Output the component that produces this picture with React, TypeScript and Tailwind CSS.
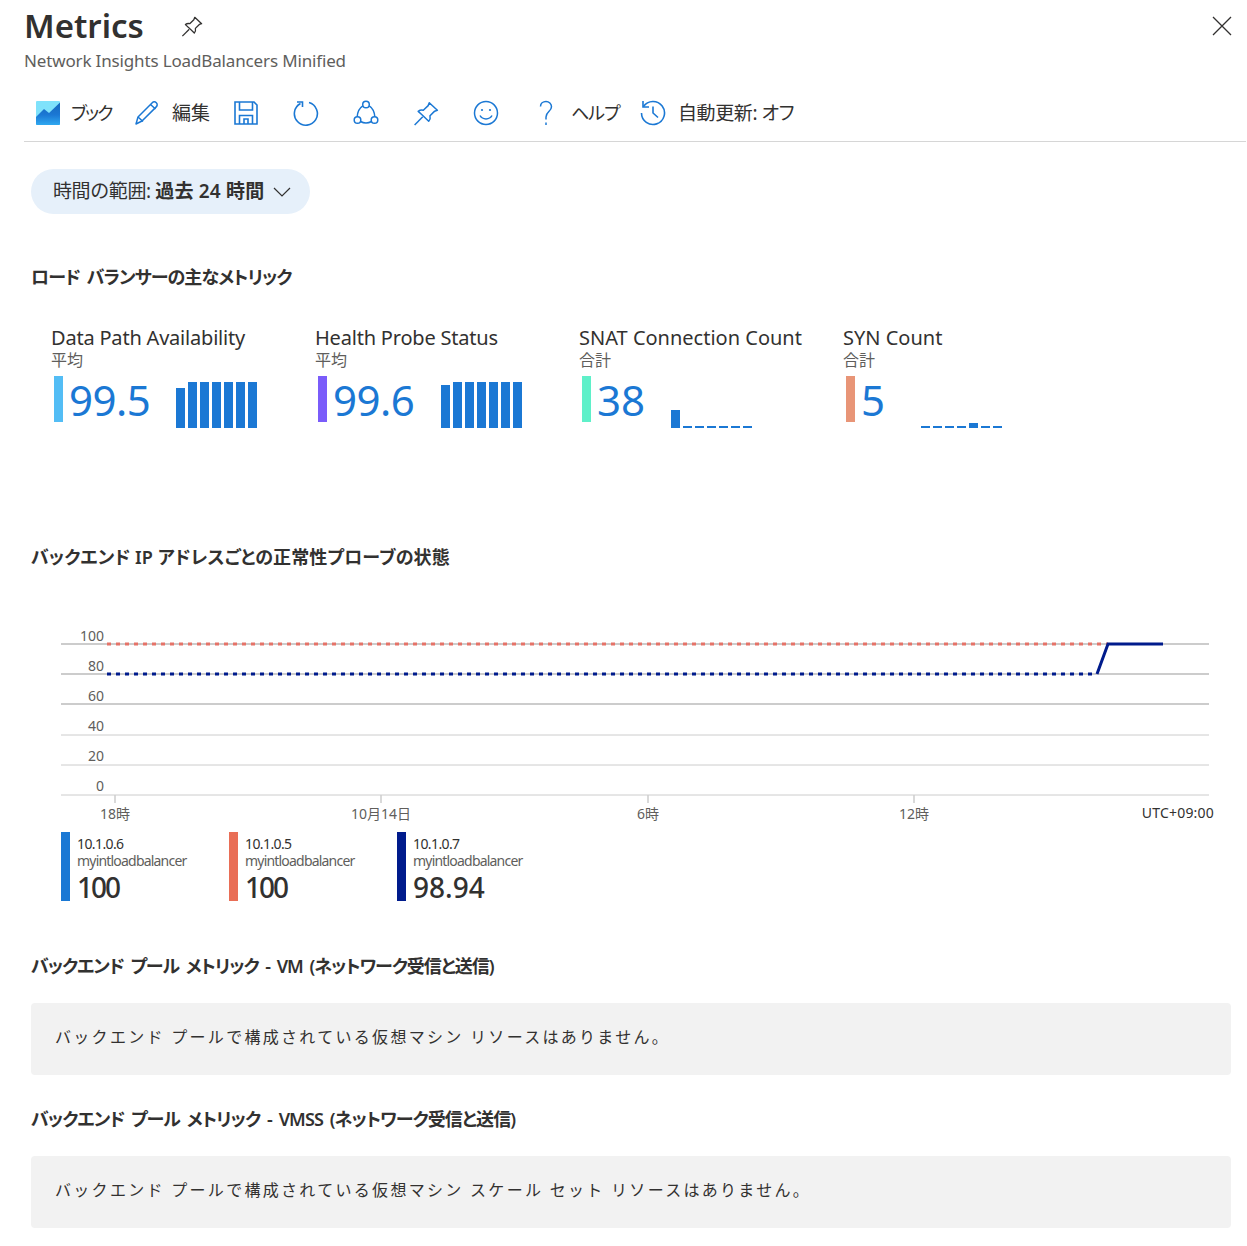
const toolIcon = "h-[26px] w-[26px] text-[#1b78d4]";

const Book = () => (
  <svg viewBox="0 0 24 24" className="h-6 w-6">
    <defs>
      <linearGradient id="bk" x1="0" y1="0" x2="0" y2="1">
        <stop offset="0" stopColor="#1668bd" />
        <stop offset="0.55" stopColor="#1b78d4" />
        <stop offset="1" stopColor="#2fa8f0" />
      </linearGradient>
    </defs>
    <rect width="24" height="24" rx="1" fill="#7fe2fb" />
    <path d="M0 16 L8 8 L13 12 L24 1.500 V23 a1 1 0 0 1-1 1 H1 a1 1 0 0 1-1-1Z" fill="url(#bk)" />
  </svg>
);

const Pencil = () => (
  <svg viewBox="0 0 26 26" fill="none" stroke="currentColor" strokeWidth="1.5" className={toolIcon}>
    <path d="M2 24l2-7L18 3c1.500-1.500 3-1.500 4.300-.2s1.200 2.900-.3 4.300L8 21z" strokeLinejoin="round" />
    <path d="M4 17l5 4.500M16.500 4.500l5 4.500" />
  </svg>
);

const Save = () => (
  <svg viewBox="0 0 26 26" fill="none" stroke="currentColor" strokeWidth="1.6" className={toolIcon}>
    <path d="M2 2h19l3 3v19H2z" />
    <path d="M6.500 2v8h13V2M6.500 24v-8.500h13V24M11 24v-5h4v5" />
  </svg>
);

const Refresh = () => (
  <svg viewBox="0 0 26 26" fill="none" stroke="currentColor" strokeWidth="1.6" className={toolIcon}>
    <path d="M16 2.600A11.500 11.500 0 1 1 7.500 3.500" />
    <path d="M3 2h5.500v5" strokeWidth="1.600" transform="translate(1 0)" />
  </svg>
);

const Share = () => (
  <svg viewBox="0 0 26 26" fill="none" stroke="currentColor" strokeWidth="1.5" className={toolIcon}>
    <circle cx="13" cy="4.500" r="3.300" />
    <circle cx="4.500" cy="20" r="3.300" />
    <circle cx="21.500" cy="20" r="3.300" />
    <path d="M9.800 5.800C6.500 8 4.500 12 4.200 16.700M16.200 5.800C19.500 8 21.500 12 21.800 16.700M7.500 21.500c3.500 2 7.500 2 11 0" />
  </svg>
);

const Pin = ({ className }: { className: string }) => (
  <svg viewBox="0 0 24 24" fill="none" stroke="currentColor" strokeWidth="1.4" strokeLinejoin="round" className={className}>
    <path d="M15 1.500l7.500 7-2.500.8-4.300 4.300c.5 2 0 3.700-1.200 5L8.500 12.800 4.800 9.500c1.500-1.200 3-1.500 4.700-1l4.500-4.300z" transform="translate(0 1)" />
    <path d="M9 15.500L1.500 23" />
  </svg>
);

const Smile = () => (
  <svg viewBox="0 0 26 26" fill="none" stroke="currentColor" strokeWidth="1.5" className={toolIcon}>
    <circle cx="13" cy="13" r="11.500" />
    <circle cx="9" cy="10" r="1.100" fill="currentColor" stroke="none" />
    <circle cx="17" cy="10" r="1.100" fill="currentColor" stroke="none" />
    <path d="M7 15.500c2.500 4.500 9.500 4.500 12 0" />
  </svg>
);

const Help = () => (
  <svg viewBox="0 0 26 26" fill="none" stroke="currentColor" strokeWidth="1.5" className={toolIcon}>
    <path d="M7.500 6.500c0-3 2.500-5 5.500-5s5.500 2.200 5.500 5.200c0 4.800-5.500 5-5.500 10.300v2.500" />
    <path d="M13 22.500v2.500" strokeWidth="1.500" />
  </svg>
);

const History = () => (
  <svg viewBox="0 0 26 26" fill="none" stroke="currentColor" strokeWidth="1.6" className={toolIcon}>
    <path d="M3.500 6.500A11.500 11.500 0 1 1 1.500 13" />
    <path d="M3 1v6h6M13 6.500V13l5 4.500" />
  </svg>
);

const tiles = [
  { title: "Data Path Availability", track: "tracking-[-0.2px]", agg: "平均", value: "99.5", valueW: "w-[106px] tracking-[-0.5px]", color: "bg-[#53bdf5]", bars: [40, 46, 46, 46, 46, 46, 46] },
  { title: "Health Probe Status", track: "tracking-[-0.2px]", agg: "平均", value: "99.6", valueW: "w-[107px] tracking-[-0.5px]", color: "bg-[#7a5cfa]", bars: [43, 46, 46, 46, 46, 46, 46] },
  { title: "SNAT Connection Count", track: "", agg: "合計", value: "38", valueW: "w-[73px]", color: "bg-[#5ff0c9]", bars: [18, 2, 2, 2, 2, 2, 2] },
  { title: "SYN Count", track: "", agg: "合計", value: "5", valueW: "w-[59px]", color: "bg-[#e89577]", bars: [2, 2, 2, 2, 5, 2, 2] },
];

const legend = [
  { ip: "10.1.0.6", value: "100", track: "tracking-[-2px]", color: "bg-[#1a78d4]" },
  { ip: "10.1.0.5", value: "100", track: "tracking-[-2px]", color: "bg-[#e96e56]" },
  { ip: "10.1.0.7", value: "98.94", track: "", color: "bg-[#001b8c]" },
];

const gridLines = [
  { y: 24, label: "100", w: 2, up: 3 },
  { y: 54, label: "80", w: 2, up: 3 },
  { y: 84, label: "60", w: 2, up: 3 },
  { y: 115, label: "40", w: 1, up: 4 },
  { y: 145, label: "20", w: 1, up: 4 },
  { y: 175, label: "0", w: 1, up: 4 },
];

const ticks = [
  { x: 65, label: "18時" },
  { x: 331, label: "10月14日" },
  { x: 598, label: "6時" },
  { x: 864, label: "12時" },
];

const Chart = () => (
  <svg width="1197" height="212" className="block text-[14px]">
    {gridLines.map((g) => (
      <g key={g.label}>
        <line x1="11" x2="1159" y1={g.y} y2={g.y} stroke="#cccccc" strokeWidth={g.w} />
        <text x="54" y={g.y - g.up} textAnchor="end" fill="#605e5c">
          {g.label}
        </text>
      </g>
    ))}
    {ticks.map((t) => (
      <g key={t.label}>
        <line x1={t.x} x2={t.x} y1="175" y2="183" stroke="#cccccc" strokeWidth="1.500" />
        <text x={t.x} y="199" textAnchor="middle" fill="#605e5c">
          {t.label}
        </text>
      </g>
    ))}
    <line x1="57" x2="1058" y1="24" y2="24" stroke="#e57368" strokeWidth="3" strokeDasharray="4 5" />
    <line x1="57" x2="1046" y1="54" y2="54" stroke="#001b8c" strokeWidth="3" strokeDasharray="4 5" />
    <path d="M1047 54L1058 24H1113" fill="none" stroke="#001b8c" strokeWidth="3" />
    <text x="1164" y="198" textAnchor="end" fill="#323130" className="tracking-[0.2px]">
      UTC+09:00
    </text>
  </svg>
);

const App = () => {
  return (
    <div className="h-[1246px] w-[1247px] overflow-hidden bg-white font-['Noto_Sans','Noto_Sans_CJK_JP',sans-serif] text-[#323130]">
      {/* Title */}
      <div className="flex items-start justify-between pl-6 pr-[15px]">
        <div>
          <div className="flex h-[44px] items-center pt-2">
            <h1 className="text-[33px] leading-[50px] font-semibold">Metrics</h1>
            <Pin className="ml-[37px] h-[22px] w-[22px] text-[#323130]" />
          </div>
          <div className="mt-[5px] text-[17px] leading-6 tracking-[-0.15px] text-[#605e5c]">Network Insights LoadBalancers Minified</div>
        </div>
        <svg viewBox="0 0 20 20" stroke="#323130" strokeWidth="1.300" className="mt-4 h-5 w-5">
          <path d="M1 1l18 18M19 1L1 19" />
        </svg>
      </div>

      {/* Toolbar */}
      <div className="ml-6 mr-px mt-[13px] flex h-[56px] items-center border-b border-[#d6d6d6] pb-px pl-3 text-[19px] whitespace-nowrap text-[#323130] [font-feature-settings:'palt']">
        <Book />
        <span className="ml-[11px] w-[41px] text-[18px] tracking-[-1.8px]">ブック</span>
        <span className="ml-[22px]"><Pencil /></span>
        <span className="ml-3 w-[39px]">編集</span>
        <span className="ml-[22px]"><Save /></span>
        <span className="ml-[34px]"><Refresh /></span>
        <span className="ml-[34px]"><Share /></span>
        <span className="ml-[34px]"><Pin className={toolIcon} /></span>
        <span className="ml-[34px]"><Smile /></span>
        <span className="ml-[34px]"><Help /></span>
        <span className="ml-3 w-[47px] text-[18px] tracking-[-1px]">ヘルプ</span>
        <span className="ml-[22px]"><History /></span>
        <span className="ml-3 tracking-[-0.4px]">自動更新: オフ</span>
      </div>

      {/* Time range pill */}
      <div className="ml-[31px] mt-[27px] flex h-[45px] w-[279px] items-center rounded-full bg-[#e6f0fa] pl-[22px] text-[19px] whitespace-nowrap">
        <span className="tracking-[-0.4px]">時間の範囲:&nbsp;</span>
        <span className="font-semibold tracking-[0.2px]">過去 24 時間</span>
        <svg viewBox="0 0 18 10" fill="none" stroke="#323130" strokeWidth="1.200" className="ml-[9px] h-[10px] w-[18px]">
          <path d="M1 1l8 8 8-8" />
        </svg>
      </div>

      <h2 className="ml-[31px] mt-[49px] text-[18px] leading-7 font-semibold tracking-[-0.9px] [word-spacing:3px] [font-feature-settings:'palt']">ロード バランサーの主なメトリック</h2>

      {/* Metric tiles */}
      <div className="ml-[51px] mt-[34px] flex">
        {tiles.map((t) => (
          <div key={t.title} className="w-[264px]">
            <div className={`text-[20px] leading-[26px] whitespace-nowrap text-[#323130] ${t.track}`}>{t.title}</div>
            <div className="-mt-px text-[16px] leading-[20px] text-[#605e5c]">{t.agg}</div>
            <div className="mt-[6px] flex h-[52px] items-start pl-[3px]">
              <div className={`h-[46px] w-[9px] ${t.color}`} />
              <div className={`ml-[6px] -mt-[2px] text-[42px] leading-[52px] text-[#1b78d4] ${t.valueW}`}>{t.value}</div>
              <div className="ml-px flex h-[52px] items-end gap-[3px]">
                {t.bars.map((h, k) => (
                  <div key={k} className="w-[9px] bg-[#1b78d4]" style={{ height: h }} />
                ))}
              </div>
            </div>
          </div>
        ))}
      </div>

      <h2 className="ml-[31px] mt-[115px] text-[18px] leading-7 font-semibold tracking-[0.1px] [font-feature-settings:'palt']">バックエンド IP アドレスごとの正常性プローブの状態</h2>

      <div className="ml-[50px] mt-[49px]">
        <Chart />
      </div>

      {/* Legend */}
      <div className="ml-[61px] flex">
        {legend.map((l) => (
          <div key={l.ip} className="flex h-[69px] w-[168px]">
            <div className={`h-[69px] w-[9px] ${l.color}`} />
            <div className="ml-[7px]">
              <div className="mt-[3px] text-[14px] leading-[17px] tracking-[-0.6px]">{l.ip}</div>
              <div className="text-[14px] leading-[17px] tracking-[-0.8px] text-[#605e5c]">myintloadbalancer</div>
              <div className={`mt-[2px] text-[28px] leading-[32px] font-medium ${l.track}`}>{l.value}</div>
            </div>
          </div>
        ))}
      </div>

      <h2 className="ml-[31px] mt-[51px] text-[18px] leading-7 font-semibold tracking-[-1px] [word-spacing:3px] [font-feature-settings:'palt']">バックエンド プール メトリック - VM (ネットワーク受信と送信)</h2>
      <div className="ml-[31px] mt-[23px] flex h-[72px] w-[1200px] items-center rounded bg-[#f2f2f2] pb-1 pl-6 text-[16px] tracking-[2.3px] text-[#323130]">
        バックエンド プールで構成されている仮想マシン リソースはありません。
      </div>

      <h2 className="ml-[31px] mt-[30px] text-[18px] leading-7 font-semibold tracking-[-0.9px] [word-spacing:3px] [font-feature-settings:'palt']">バックエンド プール メトリック - VMSS (ネットワーク受信と送信)</h2>
      <div className="ml-[31px] mt-[23px] flex h-[72px] w-[1200px] items-center rounded bg-[#f2f2f2] pb-1 pl-6 text-[16px] tracking-[2.3px] text-[#323130]">
        バックエンド プールで構成されている仮想マシン スケール セット リソースはありません。
      </div>
    </div>
  );
};

export default App;
